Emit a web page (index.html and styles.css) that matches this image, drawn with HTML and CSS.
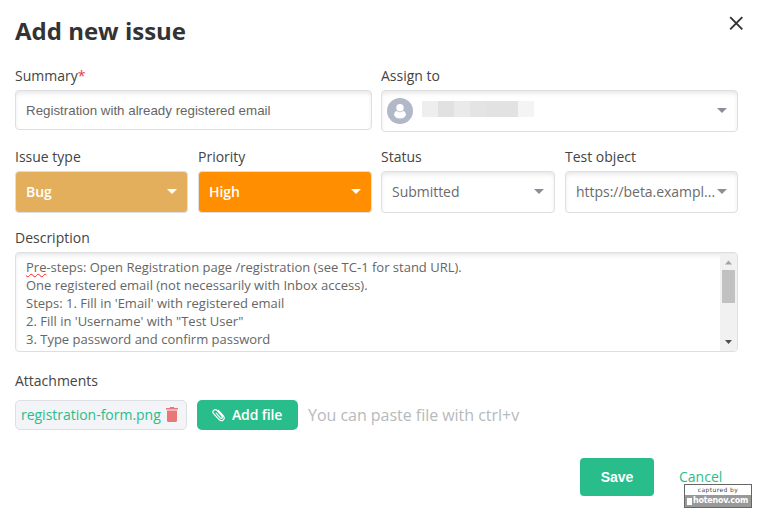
FILE: index.html
```html
<!DOCTYPE html>
<html lang="en">
<head>
<meta charset="utf-8">
<title>Add new issue</title>
<link rel="stylesheet" href="styles.css">
</head>
<body>
<main class="dialog">
  <header class="head">
    <h1 class="title">Add new issue</h1>
    <svg class="close" width="15" height="15" viewBox="0 0 15 15"><path d="M1.2 1.2 13.3 13.3M13.3 1.2 1.2 13.3"/></svg>
  </header>

  <div class="row two">
    <div class="field">
      <div class="label">Summary<span class="required">*</span></div>
      <div class="box summary"><span class="summary-text">Registration with already registered email</span></div>
    </div>
    <div class="field">
      <div class="label">Assign to</div>
      <div class="box assignee">
        <svg class="avatar" width="26" height="26" viewBox="0 0 26 26"><circle cx="13" cy="13" r="13" fill="#b3b8c8"/><ellipse cx="13" cy="16.2" rx="5.9" ry="4.3" fill="#fff"/><circle cx="13" cy="9.8" r="4.5" fill="#b3b8c8"/><circle cx="13" cy="9.7" r="3.7" fill="#fff"/></svg>
        <span class="mosaic"><i class="m1"></i><i class="m2"></i><i class="m3"></i><i class="m4"></i><i class="m5"></i><i class="m5"></i><i class="m6"></i></span>
        <i class="caret"></i>
      </div>
    </div>
  </div>

  <div class="row four">
    <div class="field">
      <div class="label">Issue type</div>
      <div class="box bug"><span class="value">Bug</span><i class="caret"></i></div>
    </div>
    <div class="field">
      <div class="label">Priority</div>
      <div class="box high"><span class="value">High</span><i class="caret"></i></div>
    </div>
    <div class="field">
      <div class="label">Status</div>
      <div class="box"><span class="value">Submitted</span><i class="caret"></i></div>
    </div>
    <div class="field">
      <div class="label">Test object</div>
      <div class="box"><span class="value">https://beta.exampl...</span><i class="caret"></i></div>
    </div>
  </div>

  <div class="field description">
    <div class="label">Description</div>
    <div class="area">
      <div class="lines">
        <div><span class="misspelt">Pre</span>-steps: Open Registration page /registration (see TC-1 for stand URL).</div>
        <div>One registered email (not necessarily with Inbox access).</div>
        <div>Steps: 1. Fill in 'Email' with registered email</div>
        <div>2. Fill in 'Username' with "Test User"</div>
        <div>3. Type password and confirm password</div>
      </div>
      <div class="scrollbar">
        <svg width="17" height="17" viewBox="0 0 17 17"><path d="M5 10.5 8.5 6.5 12 10.5z" fill="#a3a3a3"/></svg>
        <i class="thumb"></i>
        <svg class="down" width="17" height="17" viewBox="0 0 17 17"><path d="M5 6 8.5 10 12 6z" fill="#505050"/></svg>
      </div>
    </div>
  </div>

  <div class="label attachments-label">Attachments</div>
  <div class="attachments">
    <div class="file"><span class="file-name">registration-form.png</span>
      <svg class="trash" width="12" height="15" viewBox="0 0 12 15"><path d="M0 1h3.8V0h4.4v1H12v1.4H0zM1 3.4h10V13.5Q11 15 9.5 15h-7Q1 15 1 13.5z" fill="#e87878"/></svg>
    </div>
    <div class="add">
      <svg width="13" height="14" viewBox="0 0 13 14"><path d="M4.2 5.1 8.3 9.8Q9.2 10.7 10 10T10 8.1L5.2 2.7Q3.5 .9 1.8 2.3T1.6 5.6L6.9 11.4Q9.2 13.7 11.2 12T11.4 8L6.4 2.5"/></svg>
      <span>Add file</span>
    </div>
    <span class="hint">You can paste file with ctrl+v</span>
  </div>

  <footer class="actions">
    <div class="save">Save</div>
    <div class="cancel">Cancel</div>
  </footer>
  <div class="watermark">
    <div class="wm-top">captured by</div>
    <div class="wm-bottom"><i></i><span>hotenov.com</span></div>
  </div>
</main>
</body>
</html>
```

FILE: styles.css
```css
* { box-sizing: border-box; }
body { margin: 0; background: #fff; font: 14px/20px "Open Sans", sans-serif; color: #444; overflow: hidden; }
.dialog { position: relative; width: 760px; height: 516px; padding: 14px 22px 0 15px; }
.head { display: flex; justify-content: space-between; height: 52px; }
.title { margin: 0; font-size: 24px; line-height: 34px; font-weight: 700; color: #333; }
.close { margin: 2px -6px 0 0; fill: none; stroke: #333; stroke-width: 1.9; }
.row { display: grid; column-gap: 10px; height: 81px; }
.two { grid-template-columns: 357px 357px; column-gap: 9px; }
.four { grid-template-columns: 173px 174px 173px 173px; column-gap: 10px; }
.four .field:nth-child(3) { margin-left: -1px; }
.label { height: 20px; margin-bottom: 4px; white-space: nowrap; }
.required { color: #e03c46; }
.box { display: flex; align-items: center; height: 42px; padding: 0 10px; border: 1px solid #dedfe1; border-radius: 4px; box-shadow: inset 0 3px 5px -1px #e5e5e5; color: #6b6b6b; white-space: nowrap; }
.value { letter-spacing: -.03px; }
.summary { height: 40px; font: 13.333px "Liberation Sans", sans-serif; color: #666; }
.assignee { padding-left: 5px; }
.mosaic { display: flex; margin: -4px 0 0 9px; height: 16px; }
.mosaic i { width: 16px; }
.m1 { background: #eeeeee; }
.m2 { background: #e1e1e1; }
.m3 { background: #eaeaea; }
.m4 { background: #e4e4e4; }
.m5 { background: #e2e2e2; }
.m6 { background: #f4f4f4; }
.caret { flex: none; margin: -2px 0 0 auto; border: solid transparent; border-width: 5px 5px 0; border-top-color: #8d8d99; }
.bug, .high { color: #fff; box-shadow: none; font-weight: 600; }
.bug { background: #e3af5d; }
.high { background: #ff8f00; }
.bug .caret, .high .caret { border-top-color: #fff; }
.area { display: flex; justify-content: space-between; width: 723px; height: 100px; border: 1px solid #dedfe1; border-radius: 4px; box-shadow: inset 0 3px 5px -1px #e5e5e5; overflow: hidden; }
.lines { padding: 5px 0 0 10px; font-size: 13px; line-height: 18px; color: #666; white-space: nowrap; }
.misspelt { text-decoration: underline wavy #f22 1px; text-underline-offset: 1px; text-decoration-skip-ink: none; }
.scrollbar { display: flex; flex-direction: column; width: 17px; margin-top: 1px; background: #f1f1f1; }
.scrollbar svg { flex: none; }
.thumb { height: 33px; width: 13px; margin: -1px 0 0 2px; background: #c1c1c1; }
.down { margin-top: auto; }
.attachments-label { margin: 19px 0 9px; }
.attachments { display: flex; align-items: center; height: 30px; white-space: nowrap; }
.file { display: flex; align-items: center; justify-content: space-between; width: 172px; height: 30px; padding: 0 8px 0 5px; background: #f2f4f7; border: 1px solid #dedfe2; border-radius: 5px; color: #29bd8b; }
.file-name { letter-spacing: -.02px; }
.trash { margin-top: -1px; }
.add { display: flex; align-items: center; width: 101px; height: 30px; margin-left: 10px; padding-left: 15px; gap: 7px; border-radius: 5px; background: #29bd8b; color: #fff; font-weight: 600; letter-spacing: -.15px; }
.add svg { flex: none; fill: none; stroke: #fff; stroke-width: 1.2; stroke-linecap: round; }
.hint { margin-left: 10px; font-size: 16px; letter-spacing: -.03px; color: #b5babd; }
.actions { display: flex; align-items: center; height: 38px; margin: 28px 0 0 565px; }
.save { width: 74px; height: 38px; border-radius: 4px; background: #29bd8b; color: #fff; text-align: center; font: 700 14px/38px "Liberation Sans", sans-serif; }
.cancel { margin-left: 25px; color: #29bd8b; }
.watermark { position: absolute; left: 684px; top: 484px; width: 68px; height: 24px; border: 1px solid #666; background: #999; }
.wm-top { height: 10px; background: #fff; color: #444; font: 6px/10px "DejaVu Sans", sans-serif; letter-spacing: .4px; text-align: center; }
.wm-bottom { display: flex; align-items: center; gap: 1px; height: 12px; padding-left: 2px; color: #fff; font: 700 8px/12px "DejaVu Sans", sans-serif; letter-spacing: -.25px; }
.wm-bottom i { width: 5px; height: 7px; background: #fff; }
```
